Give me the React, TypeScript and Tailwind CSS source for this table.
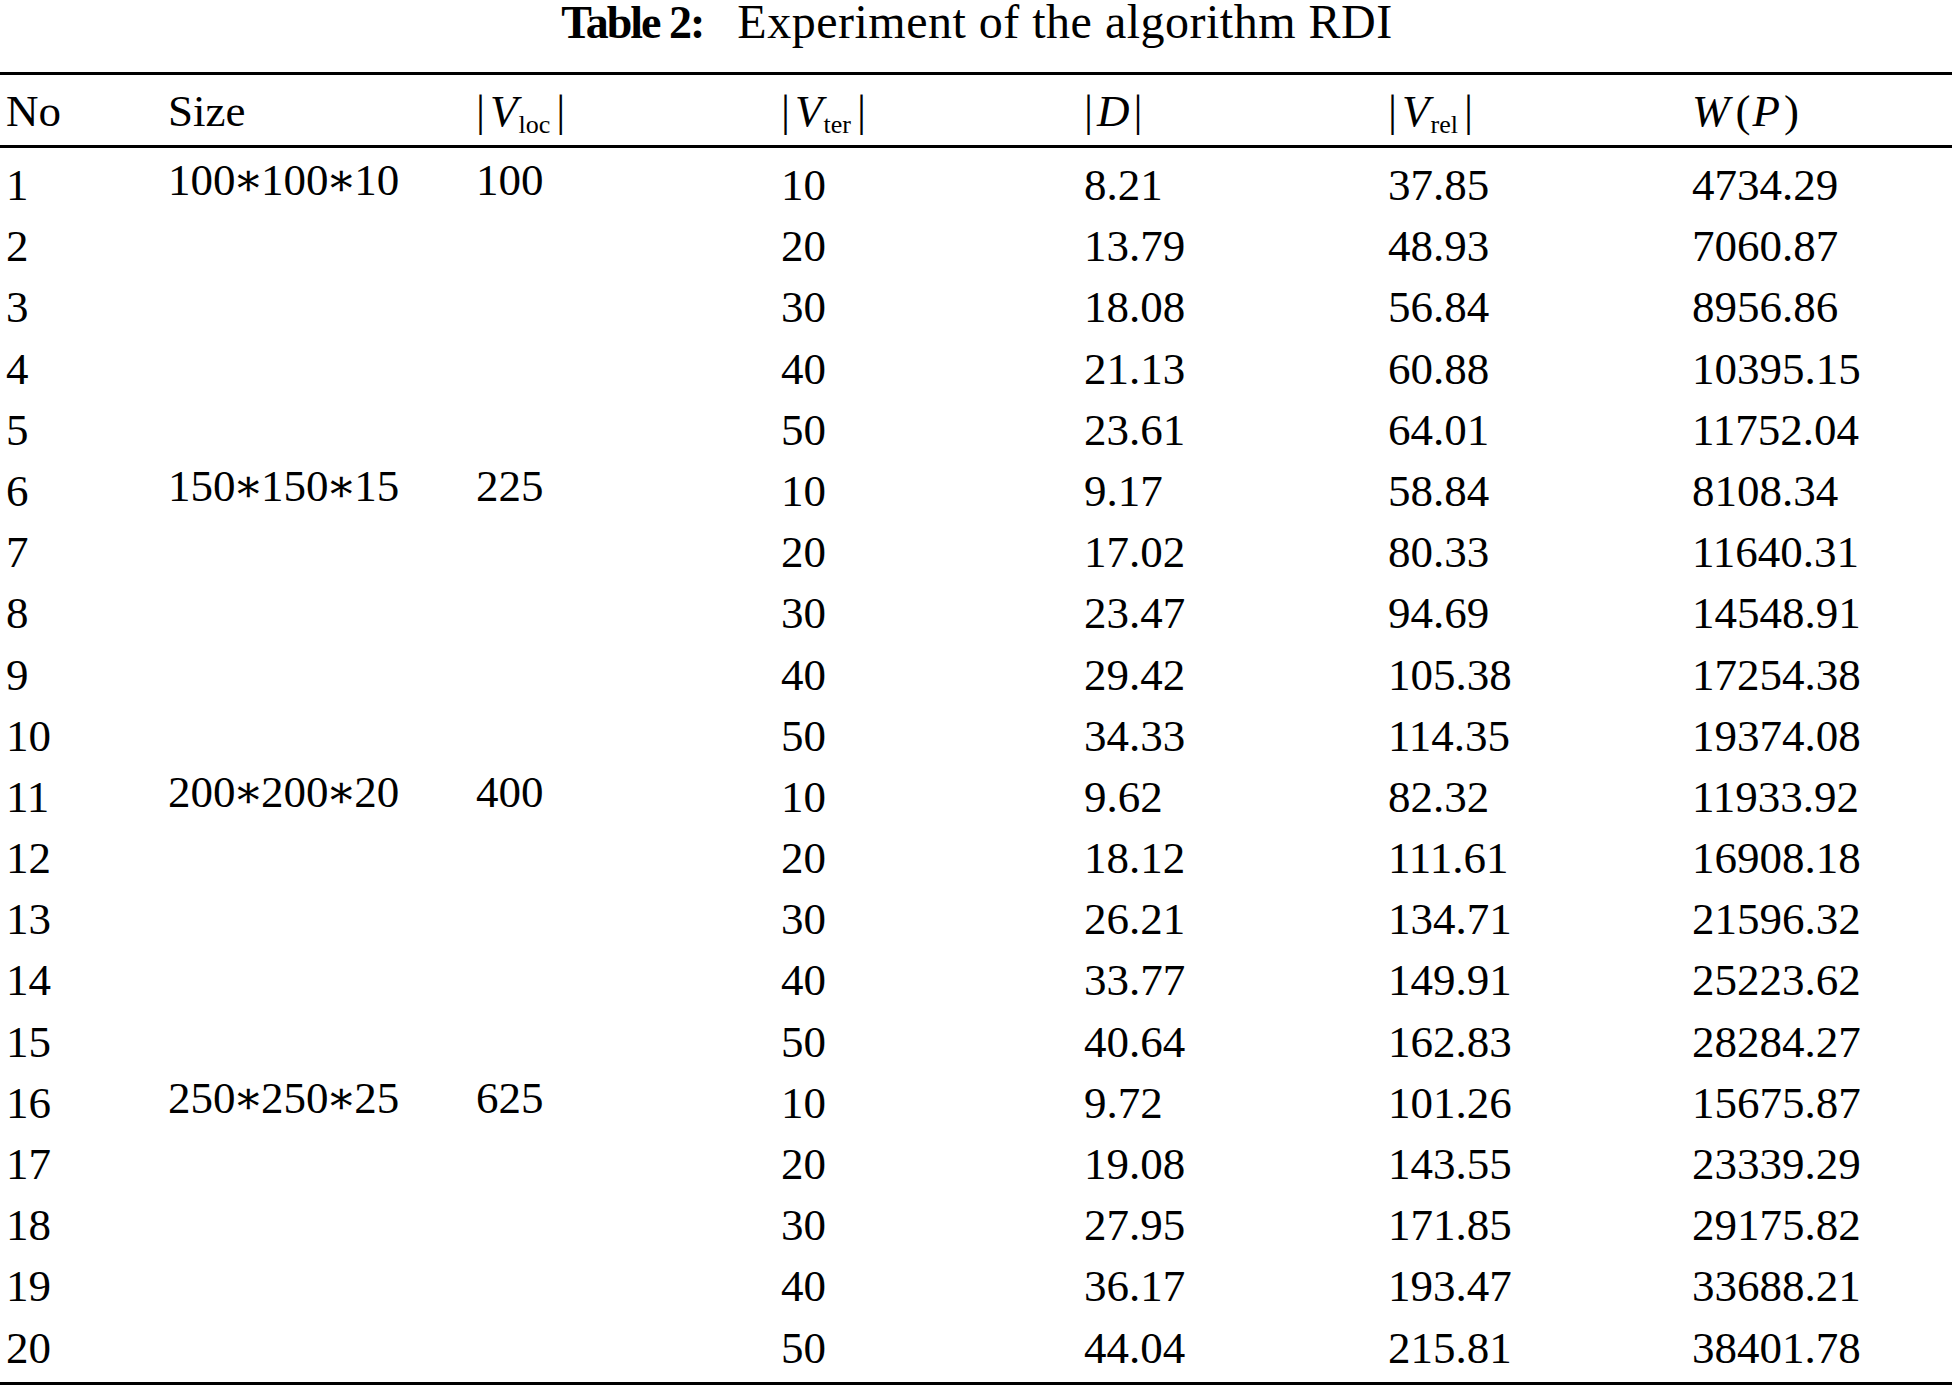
const groups = [
  {
    size: "100∗100∗10",
    loc: "100",
    rows: [
      ["1", "10", "8.21", "37.85", "4734.29"],
      ["2", "20", "13.79", "48.93", "7060.87"],
      ["3", "30", "18.08", "56.84", "8956.86"],
      ["4", "40", "21.13", "60.88", "10395.15"],
      ["5", "50", "23.61", "64.01", "11752.04"],
    ],
  },
  {
    size: "150∗150∗15",
    loc: "225",
    rows: [
      ["6", "10", "9.17", "58.84", "8108.34"],
      ["7", "20", "17.02", "80.33", "11640.31"],
      ["8", "30", "23.47", "94.69", "14548.91"],
      ["9", "40", "29.42", "105.38", "17254.38"],
      ["10", "50", "34.33", "114.35", "19374.08"],
    ],
  },
  {
    size: "200∗200∗20",
    loc: "400",
    rows: [
      ["11", "10", "9.62", "82.32", "11933.92"],
      ["12", "20", "18.12", "111.61", "16908.18"],
      ["13", "30", "26.21", "134.71", "21596.32"],
      ["14", "40", "33.77", "149.91", "25223.62"],
      ["15", "50", "40.64", "162.83", "28284.27"],
    ],
  },
  {
    size: "250∗250∗25",
    loc: "625",
    rows: [
      ["16", "10", "9.72", "101.26", "15675.87"],
      ["17", "20", "19.08", "143.55", "23339.29"],
      ["18", "30", "27.95", "171.85", "29175.82"],
      ["19", "40", "36.17", "193.47", "33688.21"],
      ["20", "50", "44.04", "215.81", "38401.78"],
    ],
  },
];

// column widths, shared by the header and the body
const cols = ["w-[162px]", "w-[308px]", "w-[305px]", "w-[303px]", "w-[304px]", "w-[304px]", "flex-1"];

const Abs = ({ v, sub }: { v: string; sub?: string }) => (
  <span className="whitespace-nowrap">
    <span>|</span>
    <span className="italic ml-[5px]">{v}</span>
    {sub && <span className="text-[26px] relative top-[7px] ml-[1px]">{sub}</span>}
    <span className={sub ? "ml-[6px]" : ""}>|</span>
  </span>
);

// the math asterisk falls back to a wider font, so pull it in a little
const Size = ({ text }: { text: string }) => {
  const parts = text.split("∗");
  return (
    <>
      {parts.map((p, i) => (
        <span key={i}>
          {i > 0 && <span className="-mx-[2.5px]">∗</span>}
          {p}
        </span>
      ))}
    </>
  );
};

const Column = ({ width, values }: { width: string; values: string[] }) => (
  <div className={`${width} flex flex-col`}>
    {values.map((v, i) => (
      <div key={i} className="h-[61.2px] leading-[61.2px]">
        {v}
      </div>
    ))}
  </div>
);

export default function App() {
  return (
    <div className="w-[1954px] min-h-[1392px] bg-white text-black font-[family-name:'Liberation_Serif','DejaVu_Serif',serif]">
      {/* Caption */}
      <div className="h-[43px] flex justify-center items-baseline leading-[43px] whitespace-nowrap">
        <span className="font-bold text-[46px] tracking-[-2px]">Table 2:</span>
        <span className="ml-[34px] text-[48px] tracking-[0.5px]">Experiment of the algorithm RDI</span>
      </div>

      <div className="mt-[29px] w-[1952px] border-t-[3px] border-b-[3px] border-black">
        {/* Header row */}
        <div className="flex pl-[6px] h-[73px] leading-[73px] text-[45px] border-b-[3px] border-black">
          <div className={cols[0]}>No</div>
          <div className={cols[1]}>Size</div>
          <div className={cols[2]}>
            <Abs v="V" sub="loc" />
          </div>
          <div className={cols[3]}>
            <Abs v="V" sub="ter" />
          </div>
          <div className={cols[4]}>
            <span>|</span>
            <span className="italic ml-[4px]">D</span>
            <span className="ml-[4px]">|</span>
          </div>
          <div className={cols[5]}>
            <Abs v="V" sub="rel" />
          </div>
          <div className={cols[6]}>
            <span className="italic">W</span>
            <span className="ml-[6px]">(</span>
            <span className="italic ml-[2px]">P</span>
            <span className="ml-[4px]">)</span>
          </div>
        </div>

        {/* Body */}
        <div className="pt-[7px] pb-[3px] text-[45px]">
          {groups.map((g) => (
            <div key={g.size} className="flex pl-[6px]">
              <Column width={cols[0]} values={g.rows.map((r) => r[0])} />
              <div className={`${cols[1]} leading-[51px]`}>
                <Size text={g.size} />
              </div>
              <div className={`${cols[2]} leading-[51px]`}>{g.loc}</div>
              <Column width={cols[3]} values={g.rows.map((r) => r[1])} />
              <Column width={cols[4]} values={g.rows.map((r) => r[2])} />
              <Column width={cols[5]} values={g.rows.map((r) => r[3])} />
              <Column width={cols[6]} values={g.rows.map((r) => r[4])} />
            </div>
          ))}
        </div>
      </div>
    </div>
  );
}
